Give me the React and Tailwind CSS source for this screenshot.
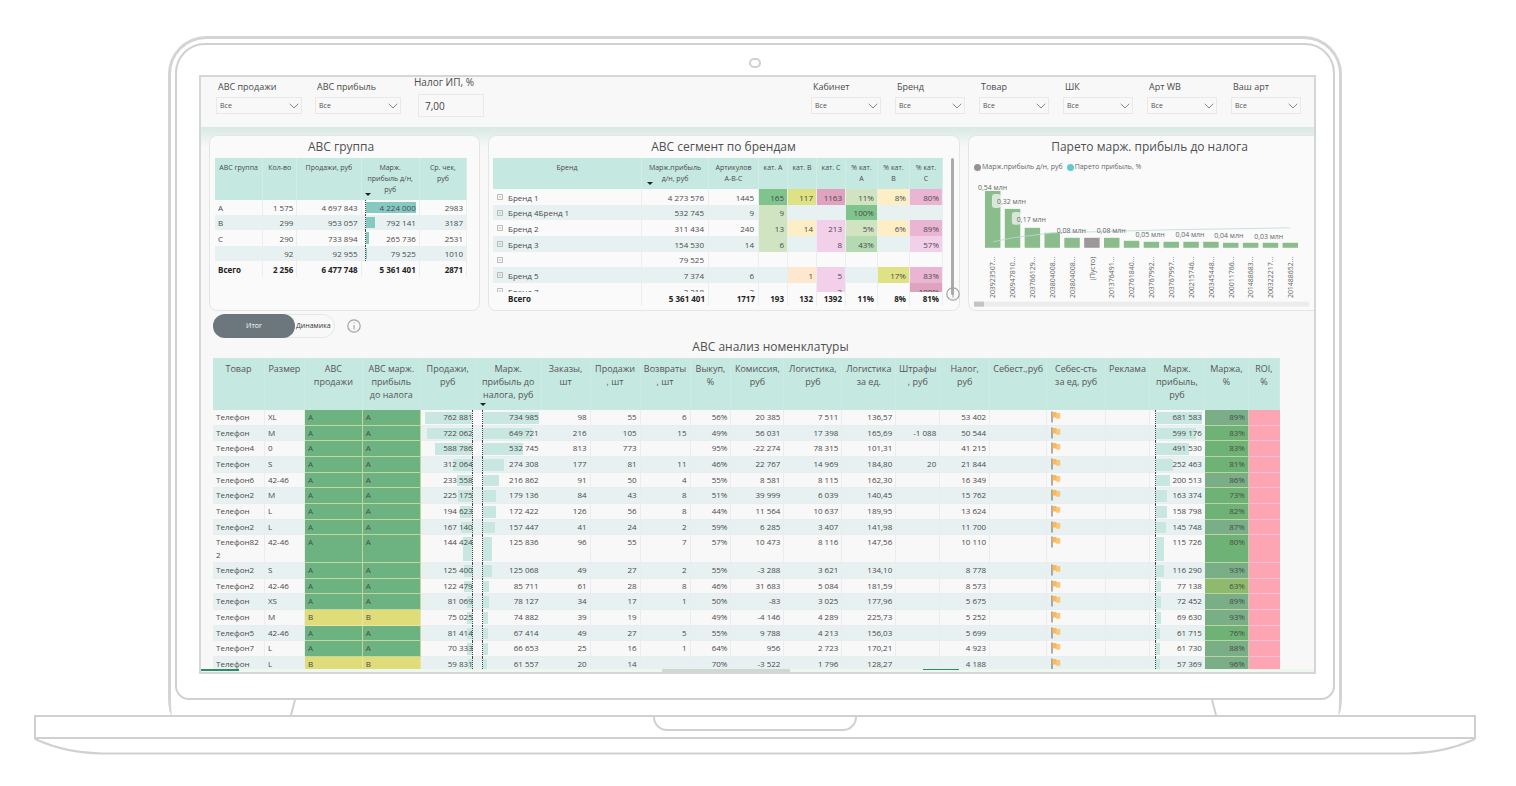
import { ChevronDown } from "lucide-react";

const leftFilters = ["ABC продажи", "ABC прибыль"];
const rightFilters = ["Кабинет", "Бренд", "Товар", "ШК", "Арт WB", "Ваш арт"];

const groups = [
  ["A", "1 575", "4 697 843", "4 224 000", "2983"],
  ["B", "299", "953 057", "792 141", "3187"],
  ["C", "290", "733 894", "265 736", "2531"],
  ["", "92", "92 955", "79 525", "1010"],
];
const groupCols = [48, 34, 64, 58, 47];

const G1 = "bg-[#7fc48d]";
const G2 = "bg-[#d0e4c2]";
const G3 = "bg-[#b3dab0]";
const Y1 = "bg-[#dfe284]";
const Y2 = "bg-[#fcefc6]";
const P1 = "bg-[#dfa3c0]";
const P2 = "bg-[#f2d0ea]";
const P3 = "bg-[#eab4d3]";

// each cell is [text, background]
const brands = [
  ["Бренд 1", "4 273 576", "1445", ["165", G1], ["117", Y1], ["1163", P1], ["11%", G2], ["8%", Y2], ["80%", P3]],
  ["Бренд 4Бренд 1", "532 745", "9", ["9", G2], [""], [""], ["100%", G1], [""], [""]],
  ["Бренд 2", "311 434", "240", ["13", G2], ["14", Y2], ["213", P2], ["5%", G2], ["6%", Y2], ["89%", P3]],
  ["Бренд 3", "154 530", "14", ["6", G2], [""], ["8", P2], ["43%", G3], [""], ["57%", P2]],
  ["", "79 525", "", [""], [""], [""], [""], [""], [""]],
  ["Бренд 5", "7 374", "6", [""], ["1", "bg-[#fde8cf]"], ["5", P2], [""], ["17%", Y1], ["83%", P3]],
  ["Бренд 7", "2 218", "2", [""], [""], ["2", P2], [""], [""], ["100%", P1]],
];
const brandCols = [149, 67, 50, 29, 29, 29, 32, 32, 33];
const brandHeads = ["Бренд", "Марж.прибыль д/н, руб", "Артикулов A-B-C", "кат. A", "кат. B", "кат. C", "% кат. A", "% кат. B", "% кат. C"];
const brandTotals = ["5 361 401", "1717", "193", "132", "1392", "11%", "8%", "81%"];

const itemHeads = [
  ["Товар", 52], ["Размер", 40], ["ABC\nпродажи", 58], ["ABC марж.\nприбыль\nдо налога", 58],
  ["Продажи,\nруб", 55], ["Марж.\nприбыль до\nналога, руб", 66], ["Заказы,\nшт", 49], ["Продажи\n, шт", 50],
  ["Возвраты\n, шт", 50], ["Выкуп,\n%", 41], ["Комиссия,\nруб", 53], ["Логистика,\nруб", 58],
  ["Логистика\nза ед.", 54], ["Штрафы\n, руб", 44], ["Налог,\nруб", 50], ["Себест.,руб", 57],
  ["Себес-сть\nза ед, руб", 59], ["Реклама", 44], ["Марж.\nприбыль,\nруб", 55], ["Маржа,\n%", 44], ["ROI,\n%", 31],
];

const items = [
  ["Телефон", "XL", "A", "762 881", "734 985", "98", "55", "6", "56%", "20 385", "7 511", "136,57", "", "53 402", "681 583", "89%"],
  ["Телефон", "M", "A", "722 062", "649 721", "216", "105", "15", "49%", "56 031", "17 398", "165,69", "-1 088", "50 544", "599 176", "83%"],
  ["Телефон4", "0", "A", "588 786", "532 745", "813", "773", "", "95%", "-22 274", "78 315", "101,31", "", "41 215", "491 530", "83%"],
  ["Телефон", "S", "A", "312 064", "274 308", "177", "81", "11", "46%", "22 767", "14 969", "184,80", "20", "21 844", "252 463", "81%"],
  ["Телефон6", "42-46", "A", "233 558", "216 862", "91", "50", "4", "55%", "8 581", "8 115", "162,30", "", "16 349", "200 513", "86%"],
  ["Телефон2", "M", "A", "225 175", "179 136", "84", "43", "8", "51%", "39 999", "6 039", "140,45", "", "15 762", "163 374", "73%"],
  ["Телефон", "L", "A", "194 623", "172 422", "126", "56", "8", "44%", "11 564", "10 637", "189,95", "", "13 624", "158 798", "82%"],
  ["Телефон2", "L", "A", "167 140", "157 447", "41", "24", "2", "59%", "6 285", "3 407", "141,98", "", "11 700", "145 748", "87%"],
  ["Телефон822", "42-46", "A", "144 424", "125 836", "96", "55", "7", "57%", "10 473", "8 116", "147,56", "", "10 110", "115 726", "80%"],
  ["Телефон2", "S", "A", "125 400", "125 068", "49", "27", "2", "55%", "-3 288", "3 621", "134,10", "", "8 778", "116 290", "93%"],
  ["Телефон2", "42-46", "A", "122 479", "85 711", "61", "28", "8", "46%", "31 683", "5 084", "181,59", "", "8 573", "77 138", "63%"],
  ["Телефон", "XS", "A", "81 069", "78 127", "34", "17", "1", "50%", "-83", "3 025", "177,96", "", "5 675", "72 452", "89%"],
  ["Телефон", "M", "B", "75 025", "74 882", "39", "19", "", "49%", "-4 146", "4 289", "225,73", "", "5 252", "69 630", "93%"],
  ["Телефон5", "42-46", "A", "81 414", "67 414", "49", "27", "5", "55%", "9 788", "4 213", "156,03", "", "5 699", "61 715", "76%"],
  ["Телефон7", "L", "A", "70 333", "66 653", "25", "16", "1", "64%", "956", "2 723", "170,21", "", "4 923", "61 730", "88%"],
  ["Телефон", "L", "B", "59 831", "61 557", "20", "14", "", "70%", "-3 522", "1 796", "128,27", "", "4 188", "57 369", "96%"],
];

const pareto = [
  ["203923507...", 57], ["200947810...", 39], ["203766129...", 20], ["203804008...", 15],
  ["203804008...", 10], ["(Пусто)", 10], ["201376491...", 10], ["202761840...", 7],
  ["203767992...", 6], ["203767997...", 6], ["200215746...", 6], ["200345448...", 6],
  ["200011766...", 5], ["201488683...", 5], ["200322217...", 5], ["201488652...", 5],
];
const paretoLabels = [
  ["0,54 млн", 9, 18], ["0,32 млн", 28, 32], ["0,17 млн", 48, 50], ["0,08 млн", 88, 61], ["0,08 млн", 128, 61],
  ["0,05 млн", 167, 65], ["0,04 млн", 207, 65], ["0,04 млн", 246, 66], ["0,03 млн", 286, 67],
];

const num = (s) => Number(s.replace(/\s/g, ""));

function Cols({ widths }) {
  const total = widths.reduce((a, b) => a + b, 0);
  return (
    <colgroup>
      {widths.map((w, i) => (
        <col key={i} style={{ width: `${(w / total) * 100}%` }} />
      ))}
    </colgroup>
  );
}

function Filter({ label, wide }) {
  return (
    <label className={`flex flex-col ${wide ? "w-[86px]" : "w-[70px]"}`}>
      <span className="pl-0.5 text-[9px] leading-[12px] text-[#4b4b4b] whitespace-nowrap">{label}</span>
      <span className="relative mt-1 block">
        <select className="block h-[17px] w-full appearance-none border border-[#e9e9e9] bg-transparent pl-[3px] pt-[2px] text-[7px] text-[#555] outline-none">
          <option>Все</option>
        </select>
        <ChevronDown className="pointer-events-none absolute right-0 top-px h-4 w-4 text-[#777]" strokeWidth={1.3} />
      </span>
    </label>
  );
}

function SortMark({ className }) {
  return <span className={`absolute h-0 w-0 border-x-[3px] border-t-[3px] border-x-transparent border-t-[#222] ${className}`} />;
}

function InfoIcon({ className }) {
  return (
    <svg viewBox="0 0 14 14" className={className} fill="none" stroke="#a3a3a3">
      <circle cx="7" cy="7" r="6.2" strokeWidth="1.2" />
      <path d="M7 6v4.5M7 3.4v1.2" strokeWidth="1.1" />
    </svg>
  );
}

function Flag() {
  return (
    <svg viewBox="0 0 10 12" className="mt-px h-[12px] w-[10px]">
      <path d="M1 0.5v11" stroke="#6b5c57" strokeWidth="1" />
      <path d="M1.5 1h4v1.2H9.2v5.3H5.2V6.4H1.5z" fill="#f9b85c" />
      <path d="M5.4 2.4h3.4v4.8H5.4z" fill="#fbc877" />
    </svg>
  );
}

function GroupCard() {
  return (
    <section className="w-[271px] shrink-0 rounded-lg border border-[#e4e6e6] bg-[#fafafa] pr-3 pl-[5px] pt-[3px]">
      <h2 className="mb-[3px] text-center text-[12px] leading-[16px] text-[#505050]">ABC группа</h2>
      <table className="w-full table-fixed border-separate border-spacing-0 text-[8px] leading-[15px] text-[#4a4a4a]">
        <Cols widths={groupCols} />
        <thead>
          <tr className="h-[42px] bg-[#c5e8e1] align-top text-[7px] leading-[11px]">
            {["ABC группа", "Кол-во", "Продажи, руб", "Марж.\nприбыль д/н,\nруб", "Ср. чек,\nруб"].map((h, i) => (
              <th key={h} className="relative whitespace-pre border-r border-[#d3ece6] px-0.5 pt-1 font-normal">
                {h}
                {i === 3 && <SortMark className="bottom-[4px] left-[3px]" />}
              </th>
            ))}
          </tr>
        </thead>
        <tbody>
          {groups.map((row, r) => (
            <tr key={r} className={`${r === 2 ? "h-4" : "h-[15px]"} ${r % 2 ? "bg-[#e8f1f1]" : ""}`}>
              {row.map((c, i) => (
                <td key={i} className={`relative border-r border-[#ebeeee] ${i ? "pr-[3px] text-right" : "pl-[3px]"}`}>
                  {i === 3 && (
                    <span className="absolute inset-y-0 left-[3px] right-[3px] border-l border-dotted border-[#444]">
                      <span className="absolute inset-y-[2px] left-0 bg-[#86c9c2]" style={{ width: `${(num(c) / 4224000) * 100}%` }} />
                    </span>
                  )}
                  <span className="relative">{c}</span>
                </td>
              ))}
            </tr>
          ))}
        </tbody>
        <tfoot>
          <tr className="h-4 font-bold text-[#222]">
            {["Всего", "2 256", "6 477 748", "5 361 401", "2871"].map((c, i) => (
              <td key={i} className={`border-r border-[#ebeeee] ${i ? "pr-[3px] text-right" : "pl-[3px]"}`}>{c}</td>
            ))}
          </tr>
        </tfoot>
      </table>
    </section>
  );
}

function BrandCard() {
  return (
    <section className="flex min-w-0 flex-1 flex-col rounded-lg border border-[#e4e6e6] bg-[#fafafa] pl-1 pr-[5px] pt-[3px]">
      <h2 className="mb-[3px] text-center text-[12px] leading-[16px] text-[#505050]">ABC сегмент по брендам</h2>
      <div className="flex">
        <div className="min-w-0 flex-1">
          <div className="h-[134px] overflow-hidden">
            <table className="w-full table-fixed border-separate border-spacing-0 text-[8px] leading-[15px] text-[#4a4a4a]">
              <Cols widths={brandCols} />
              <thead>
                <tr className="h-[31px] bg-[#c5e8e1] align-top text-[7px] leading-[11px]">
                  {brandHeads.map((h, i) => (
                    <th key={h} className="relative border-r border-[#d3ece6] px-1 pt-1 font-normal">
                      {h}
                      {i === 1 && <SortMark className="bottom-[4px] left-[5px]" />}
                    </th>
                  ))}
                </tr>
              </thead>
              <tbody>
                {brands.map(([name, profit, count, ...cells], r) => (
                  <tr key={r} className={`${r % 3 === 1 ? "h-[15px]" : "h-4"} ${r % 2 ? "bg-[#e8f1f1]" : ""}`}>
                    <td className="border-r border-[#ebeeee] pl-[4px]">
                      <span className="flex items-center gap-[5px]">
                        <svg viewBox="0 0 6 6" className="h-[6px] w-[6px] shrink-0" fill="none" stroke="#a8acac" strokeWidth="0.8">
                          <path d="M.5.5h5v5h-5zM1.8 3h2.4" />
                        </svg>
                        {name}
                      </span>
                    </td>
                    <td className="border-r border-[#ebeeee] pr-1 text-right">{profit}</td>
                    <td className="border-r border-[#ebeeee] pr-1 text-right">{count}</td>
                    {cells.map(([text, bg], i) => (
                      <td key={i} className={`border-r border-[#ebeeee] pr-[3px] text-right ${bg || ""}`}>{text}</td>
                    ))}
                  </tr>
                ))}
              </tbody>
            </table>
          </div>
          <table className="w-full table-fixed border-separate border-spacing-0 text-[8px] leading-[14px] font-bold text-[#222]">
            <Cols widths={brandCols} />
            <tbody>
              <tr>
                <td className="border-r border-[#ebeeee] pl-[15px]">Всего</td>
                {brandTotals.map((c, i) => (
                  <td key={i} className="border-r border-[#ebeeee] pr-[3px] text-right">{c}</td>
                ))}
              </tr>
            </tbody>
          </table>
        </div>
        <div className="relative ml-2 h-[137px] w-[3px] rounded-full bg-[#aaaaaa]">
          <InfoIcon className="absolute -bottom-[6px] -left-[5px] h-[14px] w-[14px]" />
        </div>
      </div>
    </section>
  );
}

function ParetoCard() {
  return (
    <section className="w-[346px] shrink-0 rounded-l-lg border border-r-0 border-[#e4e6e6] bg-[#fafafa] pt-[3px]">
      <h2 className="text-center text-[12px] leading-[16px] text-[#505050] pl-4">Парето марж. прибыль до налога</h2>
      <div className="mt-[7px] flex h-[10px] items-center gap-1 pl-[5px] text-[7px] leading-[10px] text-[#666]">
        <span className="flex items-center gap-[1px]"><i className="h-[7px] w-[7px] rounded-full bg-[#979193]" />Марж.прибыль д/н, руб</span>
        <span className="flex items-center gap-[1px]"><i className="h-[7px] w-[7px] rounded-full bg-[#5fcbcd]" />Парето прибыль, %</span>
      </div>
      <svg viewBox="0 0 346 136" className="block w-full font-['Open_Sans','Noto_Sans',sans-serif]">
        {pareto.map(([id, h], i) => (
          <g key={i}>
            <rect x={16 + i * 19.9} y={76 - h} width="15.5" height={h} fill={id === "(Пусто)" ? "#9d979a" : "#8bbd8c"} />
            <text transform={`translate(${26.5 + i * 19.9} 85) rotate(-90)`} textAnchor="end" fontSize="7" fill="#666">{id}</text>
          </g>
        ))}
        <path d="M24 70 L44 66 L84 61 L124 60 L200 58 L322 56" fill="none" stroke="#b9dcdb" strokeWidth="0.8" />
        <rect x="23" y="22" width="9" height="14" rx="3" fill="#fafafa" opacity="0.7" />
        <rect x="43" y="40" width="9" height="13" rx="3" fill="#fafafa" opacity="0.7" />
        {paretoLabels.map(([t, x, y]) => (
          <text key={x} x={x} y={y} fontSize="7" fill="#666">{t}</text>
        ))}
        <rect x="5" y="130" width="336" height="5" fill="#ececec" />
        <rect x="5" y="130" width="10" height="5" fill="#c4c4c4" />
      </svg>
    </section>
  );
}

function Cell({ children, className = "" }) {
  return <td className={`border-b border-r border-[#e9eded] pr-[3px] pt-0 text-right ${className}`}>{children}</td>;
}

// data bar drawn behind the number
function BarCell({ value, max, fromRight, className }) {
  return (
    <td className="relative border-b border-[#e9eded] pr-[3px] text-right">
      <span className={`absolute -bottom-px top-0 border-dotted border-[#444] ${className}`}>
        <span
          className={`absolute inset-y-[2px] bg-[#c9e7e1] ${fromRight ? "right-0" : "left-0"}`}
          style={{ width: `${(num(value) / max) * 100}%` }}
        />
      </span>
      <span className="relative">{value}</span>
    </td>
  );
}

function marginColor(value) {
  const p = parseInt(value, 10);
  if (p < 70) return "bg-[#8dba6c]";
  if (p < 85) return "bg-[#6fb276]";
  return "bg-[#79ae86]";
}

function ItemsTable() {
  return (
    <div className="ml-3 mr-[34px]">
      <h2 className="pl-12 text-center text-[12px] leading-[16px] text-[#505050]">ABC анализ номенклатуры</h2>
      <div className="mt-[3px] max-h-[311px] overflow-hidden">
        <table className="w-full table-fixed border-separate border-spacing-0 text-[8px] leading-[14px] text-[#4a4a4a]">
          <Cols widths={itemHeads.map((h) => h[1])} />
          <thead>
            <tr className="h-[52px] bg-[#c5e8e1] align-top text-[9px] leading-[13px]">
              {itemHeads.map(([h], i) => (
                <th key={i} className="relative whitespace-pre border-r border-[#cdebe5] pt-1 font-normal text-[#555]">
                  {h}
                  {i === 5 && <SortMark className="bottom-[4px] left-[4px]" />}
                </th>
              ))}
            </tr>
          </thead>
          <tbody>
            {items.map((row, i) => {
              const [name, size, abc, sales, profit, orders, sold, returned, buyout, fee, logistics, perUnit, fines, tax, net, margin] = row;
              const abcClass = abc === "A" ? "bg-[#6cb381] border-[#c3d79a]" : "bg-[#dfdc79] border-[#e9e6a4]";
              return (
                <tr key={i} className={`align-top ${i % 3 === 1 ? "h-[15px]" : "h-4"} ${i % 2 ? "bg-[#e8f1f1]" : ""}`}>
                  <td className="break-all border-b border-r border-[#e9eded] pl-[3px] pr-1 text-left">
                    {name.length > 9 ? <span className="block pb-px leading-[13px]">{name}</span> : name}
                  </td>
                  <td className="border-b border-r border-[#e9eded] pl-[3px] text-left">{size}</td>
                  <td className={`border-b border-r pl-[3px] text-left ${abcClass}`}>{abc}</td>
                  <td className={`border-b border-r pl-[3px] text-left ${abcClass}`}>{abc}</td>
                  <BarCell value={sales} max={762881} fromRight className="left-[4px] right-[3px] border-r" />
                  <BarCell value={profit} max={734985} className="left-[6px] right-[3px] border-l" />
                  <Cell>{orders}</Cell>
                  <Cell>{sold}</Cell>
                  <Cell>{returned}</Cell>
                  <Cell>{buyout}</Cell>
                  <Cell>{fee}</Cell>
                  <Cell>{logistics}</Cell>
                  <Cell>{perUnit}</Cell>
                  <Cell>{fines}</Cell>
                  <Cell>{tax}</Cell>
                  <Cell />
                  <Cell className="pl-1"><Flag /></Cell>
                  <Cell />
                  <BarCell value={net} max={681583} className="left-[5px] right-[3px] border-l" />
                  <td className={`border-b border-r border-[#bcd3a4] pr-[3px] text-right ${marginColor(margin)}`}>{margin}</td>
                  <td className="border-b border-[#f4bfd9] bg-[#fda5b3]" />
                </tr>
              );
            })}
          </tbody>
        </table>
      </div>
    </div>
  );
}

function Report() {
  return (
    <div className="overflow-hidden border-2 border-[#d4d7d8] bg-[#f8f8f8]">
      <div className="flex h-[50px] items-start justify-between pl-[15px] pr-[13px]">
        <div className="flex gap-[13px]">
          {leftFilters.map((f) => (
            <div key={f} className="pt-[4px]"><Filter label={f} wide /></div>
          ))}
          <label className="flex flex-col">
            <span className="text-[10px] leading-[10px] text-[#4b4b4b]">Налог ИП, %</span>
            <input defaultValue="7,00" className="ml-1 mt-[7px] h-[23px] w-[66px] border border-[#e9e9e9] bg-transparent px-[6px] text-[10px] text-[#444] outline-none" />
          </label>
        </div>
        <div className="flex gap-[14px] pt-[4px]">
          {rightFilters.map((f) => <Filter key={f} label={f} />)}
        </div>
      </div>
      <div className="bg-linear-to-b from-[#d8e9e4] to-[#f8f8f8] to-[20px] pt-2">
        <div className="flex h-[176px] items-stretch gap-2 pl-2">
          <GroupCard />
          <BrandCard />
          <ParetoCard />
        </div>
      </div>
      <div className="mb-[1px] mt-[3px] flex items-center pl-3">
        <div className="flex h-6 items-center rounded-full border border-[#e6e8e8] pr-[2px]">
          <button className="-ml-px h-6 w-[82px] rounded-full bg-[#6b767d] text-[7px] text-white">Итог</button>
          <button className="px-[1px] text-[7px] text-[#333]">Динамика</button>
        </div>
        <InfoIcon className="ml-3 h-[14px] w-[14px]" />
      </div>
      <ItemsTable />
      <div className="flex h-[3px] bg-[#eef8ef]">
        <div className="h-[2px] w-[38px] bg-[#2f8a6c]" />
        <div className="ml-[38%] w-[128px] bg-[#cfd8d3]" />
        <div className="ml-[12%] h-px w-[36px] bg-[#2f8a6c]" />
      </div>
    </div>
  );
}

export default function App() {
  return (
    <main className="min-h-screen bg-white pb-8 pl-[34px] pr-10 pt-[36px] font-['Open_Sans','Noto_Sans',sans-serif]">
      <div className="mx-[134px] rounded-[38px_38px_4px_4px/38px_38px_18px_18px] border-[3px] border-b-0 border-[#d4d4d4] px-1 pt-[4px]">
        <div className="rounded-[30px_30px_14px_14px] border-2 border-[#d0d0d0] pb-6 pl-[22px] pr-[17px]">
          <div className="flex h-[30px] items-center justify-center pr-[5px] pt-[6px]">
            <div className="h-[10px] w-[12px] rounded-full border-2 border-[#d0d0d0]" />
          </div>
          <Report />
        </div>
        <div className="flex h-[15px] justify-between pl-[114px] pr-[117px]">
          <svg viewBox="0 0 8 15" className="h-[15px] w-2"><path d="M6 0L2 15" stroke="#d0d0d0" strokeWidth="2" /></svg>
          <svg viewBox="0 0 8 15" className="h-[15px] w-2"><path d="M2 0L6 15" stroke="#d0d0d0" strokeWidth="2" /></svg>
        </div>
      </div>
      <div className="h-6 border-2 border-[#d0d0d0]">
        <div className="mx-auto h-[14px] w-[204px] rounded-b-[18px] border-2 border-t-0 border-[#d0d0d0]" />
      </div>
      <svg viewBox="0 0 1442 16" preserveAspectRatio="none" className="block h-4 w-full" fill="none">
        <path d="M1 0C14 6 36 14 68 14.5H1374C1406 14 1428 6 1441 0" stroke="#d0d0d0" strokeWidth="2" />
      </svg>
    </main>
  );
}
